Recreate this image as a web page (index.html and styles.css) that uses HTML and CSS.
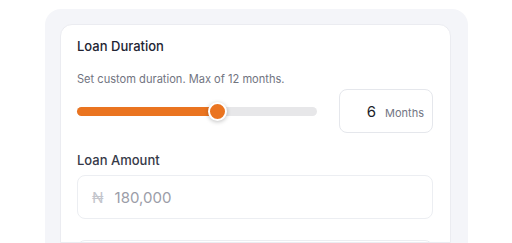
FILE: index.html
```html
<!DOCTYPE html>
<html>
<head>
<meta name="viewport" content="width=device-width, initial-scale=1">
<link rel="stylesheet" href="styles.css">
</head>
<body>

<div class="frame">
  <div class="card">
    <h2 class="field-title">Loan Duration</h2>
    <p class="hint">Set custom duration. Max of 12 months.</p>

    <div class="duration-row">
      <div class="track">
        <div class="fill" style="width: 140px;">
          <span class="thumb"></span>
        </div>
      </div>
      <div class="months-box">
        <span class="months-value">6</span>
        <span class="months-unit">Months</span>
      </div>
    </div>

    <h2 class="field-title amount-title">Loan Amount</h2>
    <div class="amount-input">
      <span class="currency">&#8358;</span>
      <span class="amount-value">180,000</span>
    </div>

    <div class="next-input"></div>
  </div>
</div>

</body>
</html>
```

FILE: styles.css
```css
* {
  box-sizing: border-box;
}

body {
  margin: 0;
  font-family: Inter, "Noto Sans", Arial, sans-serif;
  background-color: white;
  height: 243px;
  overflow: hidden;
}

/* Outer light frame */
.frame {
  margin: 9px 0 0 45px;
  width: 423px;
  height: 234px;
  padding: 15px 17px 0 15px;
  background-color: #f4f5f9;
  border-radius: 16px 16px 0 0;
}

/* White card */
.card {
  height: 100%;
  padding: 11px 17px 0 16px;
  background-color: white;
  border: 1px solid #ebecf1;
  border-radius: 12px 12px 0 0;
  overflow: hidden;
}

.field-title {
  margin: 0;
  font-size: 13px;
  line-height: 20px;
  font-weight: 500;
  color: #222433;
}

.hint {
  margin: 15px 0 0 0;
  font-size: 11.1px;
  line-height: 16px;
  color: #71747f;
}

/* Slider + months box */
.duration-row {
  display: flex;
  align-items: center;
  justify-content: space-between;
  margin-top: 2px;
}

.track {
  width: 240px;
  height: 9px;
  border-radius: 5px;
  background-color: #e7e7e9;
}

.fill {
  position: relative;
  height: 100%;
  border-radius: 5px;
  background-color: #ea7420;
}

.thumb {
  position: absolute;
  right: -10px;
  top: 50%;
  width: 19px;
  height: 19px;
  margin-top: -9px;
  border: 2px solid white;
  border-radius: 50%;
  background-color: #ea7420;
  box-shadow: 0 1px 4px rgba(0, 0, 0, 0.25);
}

.months-box {
  width: 94px;
  height: 44px;
  display: flex;
  align-items: center;
  justify-content: flex-end;
  padding-right: 8px;
  border: 1px solid #e5e7ec;
  border-radius: 8px;
}

.months-value {
  font-size: 15px;
  color: #1c1e2a;
}

.months-unit {
  margin-left: 9px;
  font-size: 11px;
  color: #727583;
  padding-top: 3px;
}

/* Amount field */
.amount-title {
  margin-top: 17px;
  color: #363948;
}

.amount-input {
  display: flex;
  align-items: center;
  height: 44px;
  margin-top: 5px;
  padding-left: 14px;
  border: 1px solid #eceef2;
  border-radius: 8px;
}

.currency {
  font-size: 15px;
  color: #c3c5cc;
}

.amount-value {
  margin-left: 11px;
  font-size: 15px;
  color: #9b9da8;
}

.next-input {
  height: 44px;
  margin-top: 21px;
  border: 1px solid #eceef2;
  border-radius: 8px;
}
```
